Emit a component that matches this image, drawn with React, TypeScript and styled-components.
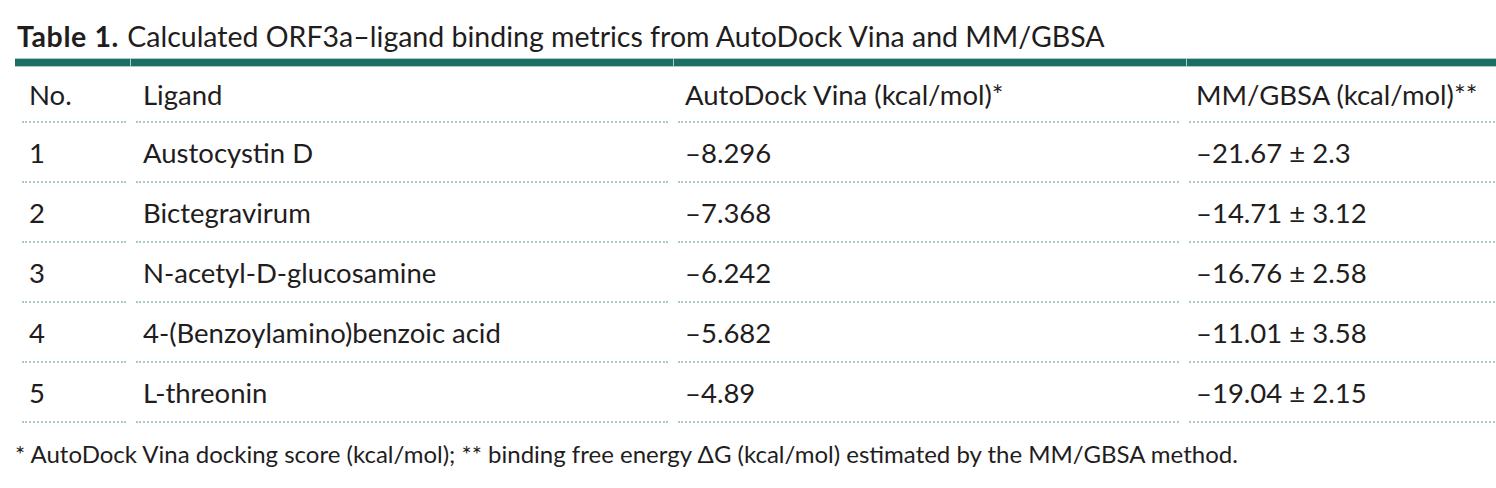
import React from "react";
import styled, { createGlobalStyle } from "styled-components";

const Global = createGlobalStyle`
  html, body { margin: 0; padding: 0; background: #ffffff; }
  body { font-family: "Lato", "Open Sans", sans-serif; color: #1f1d1e; }
`;

const Figure = styled.div`
  width: 1481px;
  padding: 18px 0 0 15px;
`;

const Title = styled.div`
  font-size: 28.5px;
  line-height: 36px;
  height: 40px;
  padding-left: 2px;
  white-space: nowrap;
`;

const Label = styled.span`
  font-weight: 700;
  letter-spacing: 0.6px;
  margin-right: 1px;
`;

const Bar = styled.div`
  display: grid;
  grid-template-columns: 115px 542px 512px 1fr;
  gap: 1px;
  height: 7px;
  background: #a9cdc5;
  border-top: 1px solid #a9cdc5;
  border-bottom: 1px solid #a9cdc5;
`;

const BarSeg = styled.div`
  background: #1b6f63;
`;

const Table = styled.table`
  width: calc(100% + 20px);
  margin: 0 -10px 0 -3px;
  border-collapse: separate;
  border-spacing: 10px 0;
  font-size: 27.5px;
`;

const Cell = styled.td<{ $w?: number }>`
  ${(p) => (p.$w ? `width: ${p.$w}px;` : "")}
  height: 58px;
  padding: 0 0 0 7px;
  border-bottom: 2px dotted #a9cdc5;
  text-align: left;
  vertical-align: middle;
  font-weight: 400;
  white-space: nowrap;
`;

const HeadCell = styled(Cell).attrs({ as: "th" })`
  height: 54px;
`;

const Note = styled.div`
  font-size: 24px;
  margin-top: 16px;
  white-space: nowrap;
`;

const rows = [
  ["1", "Austocystin D", "–8.296", "–21.67 ± 2.3"],
  ["2", "Bictegravirum", "–7.368", "–14.71 ± 3.12"],
  ["3", "N-acetyl-D-glucosamine", "–6.242", "–16.76 ± 2.58"],
  ["4", "4-(Benzoylamino)benzoic acid", "–5.682", "–11.01 ± 3.58"],
  ["5", "L-threonin", "–4.89", "–19.04 ± 2.15"],
];

export default function App() {
  return (
    <>
      <Global />
      <Figure>
        <Title>
          <Label>Table 1.</Label> Calculated ORF3a–ligand binding metrics from AutoDock Vina and MM/GBSA
        </Title>
        <Bar>
          <BarSeg />
          <BarSeg />
          <BarSeg />
          <BarSeg />
        </Bar>
        <Table>
          <thead>
            <tr>
              <HeadCell $w={97}>No.</HeadCell>
              <HeadCell $w={525}>Ligand</HeadCell>
              <HeadCell $w={494}>AutoDock Vina (kcal/mol)*</HeadCell>
              <HeadCell>MM/GBSA (kcal/mol)**</HeadCell>
            </tr>
          </thead>
          <tbody>
            {rows.map((r) => (
              <tr key={r[0]}>
                {r.map((c, i) => (
                  <Cell key={i}>{c}</Cell>
                ))}
              </tr>
            ))}
          </tbody>
        </Table>
        <Note>
          * AutoDock Vina docking score (kcal/mol); ** binding free energy ΔG (kcal/mol) estimated by the MM/GBSA method.
        </Note>
      </Figure>
    </>
  );
}
